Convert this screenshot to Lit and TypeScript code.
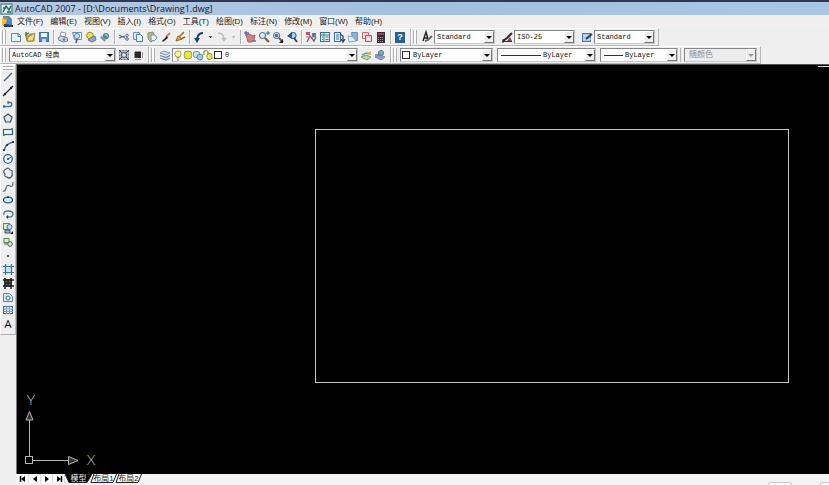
import { LitElement, html, svg, css, nothing, TemplateResult } from "lit";
import { customElement, property } from "lit/decorators.js";
import { classMap } from "lit/directives/class-map.js";

const page = svg`<path d="M2.500 3.500h7l2 2v6h-9z" fill="#e4f4fc" stroke="#5b8fb5"/><path d="M9 3.500v3h3" fill="none" stroke="#3d6f9c"/>`;
const lens = svg`<circle cx="5.500" cy="5.500" r="3" fill="#dcecf5" stroke="#5f7f9a" stroke-width="1.200"/><path d="M8 8l4 4" stroke="#6b5a50" stroke-width="2"/>`;
const bulb = svg`<circle cx="7" cy="6" r="3.200" fill="#fdf6a0" stroke="#a39a45"/><path d="M5.500 10h3M6 12h2" stroke="#77775a"/>`;
const layers = svg`<path d="M2 5l4-2 6 2-4 2z" fill="#cfe0ee" stroke="#7e9db8"/><path d="M2 7.500l6 2 4-2M2 10l6 2 4-2" fill="none" stroke="#6685a6" stroke-width="1.300"/>`;

const icons: Record<string, TemplateResult> = {
  app: svg`<rect x="1" y="2" width="11" height="10" fill="#d8ecea" stroke="#38706f"/><path d="M3 10l3-6 3 4 2-4M3 6h3M7 10h4" fill="none" stroke="#1c6a5c" stroke-width="1.400"/>`,
  doc: svg`<path d="M3 1h6l3 3v7H3z" fill="#5a86c0"/><path d="M2 3l5 2-2 5H2z" fill="#f5c22b"/><path d="M4 9l9 1v2H4z" fill="#25406e"/><path d="M3 2l3 3 2-2" fill="#e8842a"/>`,
  new: page,
  open: svg`<path d="M3 6h3l1-2h4v7H4z" fill="#e9c45c" stroke="#8a7b32"/><path d="M5 7l7-4-2 8H4z" fill="#f3dc8a" stroke="#a4893a"/><path d="M2 5l4-2M3 2v4" stroke="#4d8b45" stroke-width="1.500"/>`,
  save: svg`<rect x="2.500" y="2.500" width="9" height="9" fill="#4f86c6" stroke="#3f72ae"/><rect x="4" y="3" width="6" height="4" fill="#f1f8ff"/><rect x="5" y="9" width="4" height="3" fill="#c8dcef"/>`,
  print: svg`<path d="M5 2l5 1-1 4-5-1z" fill="#fff" stroke="#8b96aa"/><path d="M2.500 7.500l3-1.500 6 2v3l-4 1-5-2z" fill="#ccd3e4" stroke="#7482a4"/><circle cx="8" cy="9.500" r="1.200" fill="#5e78ad"/>`,
  preview: svg`<path d="M2.500 2.500h9v7h-7z" fill="#eaf3fb" stroke="#6a8fb5"/><circle cx="7" cy="6" r="2.600" fill="#c9e2f2" stroke="#5f88b0"/><path d="M7 9l-1 4" stroke="#445c7d" stroke-width="1.500"/>`,
  publish: svg`<circle cx="6" cy="5.500" r="3.300" fill="#f3dc48" stroke="#9a8a34"/><path d="M6 8l5-2 1 4-4 2-4-2z" fill="#8ea3cc" stroke="#6677a0"/>`,
  globe: svg`<path d="M2 7l5-4 5 3-5 5z" fill="#a9bfc8"/><circle cx="8" cy="6" r="3" fill="#4f8794"/><path d="M6 5l3-1 1 3" fill="#a8d7ae"/><path d="M3 7l4 4" stroke="#88929d" stroke-width="2"/>`,
  cut: svg`<path d="M2 5l6 3M2 8l6-2" stroke="#5f7183" stroke-width="1.200"/><circle cx="10" cy="5.500" r="1.300" fill="none" stroke="#4f6a90"/><circle cx="10" cy="9" r="1.300" fill="none" stroke="#4f6a90"/>`,
  copy: svg`<path d="M2.500 2.500h6v7h-6z" fill="#d9eafa" stroke="#6d96c0"/><path d="M5.500 4.500h4l2 2v5h-6z" fill="#eef8ff" stroke="#4d7fb3"/>`,
  paste: svg`<path d="M3 3l5-1 3 6-5 4-3-3z" fill="#b8b982" stroke="#8f9370"/><path d="M6 5h4l2 3-3 3-3-1z" fill="#eef4f5" stroke="#7798a5"/>`,
  brush: svg`<path d="M11 3L7 7" stroke="#d0833c" stroke-width="2"/><path d="M8 6l-5 5 1 1 5-4z" fill="#2b2b2b"/>`,
  block: svg`<path d="M3 11l2-5 4 3z" fill="#f0b43c" stroke="#9a6124"/><path d="M6 7l5-5M8 9l4-2" stroke="#a86a2c" stroke-width="1.700"/>`,
  undo: svg`<path d="M11 3C7 3 5 6 5 11" fill="none" stroke="#1c3d7c" stroke-width="2"/><path d="M2 8h6l-3 5z" fill="#1c3d7c"/>`,
  redo: svg`<path d="M3 3c4 0 6 3 6 7" fill="none" stroke="#b9bfc6" stroke-width="1.600"/><path d="M6 8h6l-3 4z" fill="#b9bfc6"/>`,
  pan: svg`<path d="M5 12L4 8 3 5l3-1 4 2 2-1-1 5-2 2z" fill="#cf7f88" stroke="#a8606c"/><path d="M1 3h5M3 1v5M9 11h4" stroke="#5e6b9a" stroke-width="1.300"/>`,
  zoom: svg`${lens}<path d="M9 3h4M11 1v4" stroke="#346a8f"/>`,
  zoomwin: svg`${lens}<rect x="4" y="4" width="3" height="3" fill="#5c7284"/><path d="M12 9v4H8z" fill="#222"/>`,
  zoomprev: svg`<circle cx="8" cy="5.500" r="3" fill="#b5d2e7" stroke="#3d6a9b" stroke-width="1.200"/><path d="M9 8l3 4" stroke="#4d4045" stroke-width="2"/><path d="M2 6l5-4v7z" fill="#28538e"/>`,
  props: svg`<rect x="2" y="2" width="4" height="3" fill="#cf4f59"/><rect x="8" y="3" width="4" height="4" fill="#5477b5"/><path d="M3 12l3-6 4 5 2-4" fill="none" stroke="#8a6494" stroke-width="1.500"/><path d="M2 7h10" stroke="#ae8b45"/>`,
  center: svg`<rect x="2.500" y="2.500" width="9" height="9" fill="#dceef1" stroke="#3f6e87"/><path d="M6 3v9M3 5h9M7.500 7h3M7.500 9.500h3M4 7h1M4 9.500h1" stroke="#497f95"/>`,
  palette: svg`<rect x="2.500" y="2.500" width="6" height="9" fill="#e4f1fa" stroke="#3b6ca4"/><path d="M4 5h3M4 7h3M4 9h3" stroke="#3f79a6"/><path d="M8 4l3 2v5M9 9l2 3 2-3" fill="none" stroke="#27466f" stroke-width="1.300"/>`,
  sheets: svg`<path d="M5.500 2.500h6v8h-5z" fill="#8eb2d6" stroke="#6b92bb"/><path d="M2 6l5 1 3 4-7 1z" fill="#e1edf7" stroke="#88a8c4"/>`,
  markup: svg`<path d="M2.500 2.500h6v6h-6z" fill="#fbe3e5" stroke="#cf6672"/><path d="M5.500 5.500h6v6h-6z" fill="#f6cbd1" stroke="#bd4c5c"/><path d="M7 8h3v2H7z" fill="#fff"/>`,
  calc: svg`<rect x="3" y="2" width="8" height="11" fill="#332f36"/><rect x="4" y="3" width="6" height="2" fill="#a34149"/><path d="M4 7.500h6M4 9.500h6M4 11.500h6" stroke="#a3a2a8" stroke-dasharray="1 1"/>`,
  textstyle: svg`<path d="M3 11l3-9 2 7M4 8h4" fill="none" stroke="#222" stroke-width="1.400"/><path d="M12 6l-4 4-3 1" fill="none" stroke="#666" stroke-width="2"/>`,
  dimstyle: svg`<path d="M2 11.500h10M3 9v4" stroke="#333"/><path d="M12 3L7 8l-4 3" fill="none" stroke="#2b2b2b" stroke-width="2"/><path d="M7 11l3-4 2 4z" fill="#7a4a4c"/>`,
  tablestyle: svg`<rect x="2.500" y="3.500" width="8" height="8" fill="#a6c6e4" stroke="#4b78a8"/><path d="M3 6h8M3 9h8" stroke="#d5e6f5"/><path d="M12 4L6 9" stroke="#293d58" stroke-width="2"/>`,
  gear: svg`<rect x="2.500" y="2.500" width="9" height="9" fill="#b4bdc7" stroke="#6a7684" stroke-dasharray="2 1"/><circle cx="7" cy="7" r="2.500" fill="#d9e3ef" stroke="#35455a"/><path d="M2 2l3 3M12 2L9 5M2 12l3-3M12 12l-3-3" stroke="#3f4b5a"/>`,
  workspace: svg`<path d="M4 4h6v6H4z" fill="#222"/><path d="M3 5h9M3 7h9M3 9h9M5 3v9M7 3v9M9 3v9" stroke="#333" stroke-dasharray="1 1"/>`,
  layers,
  bulb,
  sun: svg`<circle cx="7" cy="7" r="4" fill="#f3e245" stroke="#a99a3e"/>`,
  freeze: svg`<rect x="2.500" y="3.500" width="6" height="6" rx="2" fill="#c4dfe6" stroke="#6898aa"/><circle cx="9" cy="9" r="3" fill="#9fc3d4" stroke="#628fa6"/>`,
  lock: svg`<path d="M3 7V4q2-3 4 0v2" fill="none" stroke="#b2a53c" stroke-width="1.500"/><rect x="6" y="5.500" width="5" height="6" rx="2" fill="#f2e266" stroke="#9c8f35"/>`,
  swatch: svg`<rect x="3.500" y="3.500" width="7" height="7" fill="#fff" stroke="#333"/>`,
  layerprev: svg`<path d="M2 9l5-2 5 2-4 3z" fill="#c4d2a8" stroke="#8d9a72"/><path d="M3 7l4-2 4 1" fill="none" stroke="#7d9aa8" stroke-width="1.500"/><path d="M8 5l4-2v4z" fill="#d7bd3e"/>`,
  layerstate: svg`<path d="M2 9l5-2 5 2-4 3z" fill="#8aa0c8" stroke="#7389b2"/><circle cx="8" cy="5" r="2.600" fill="#7fa5cc" stroke="#5f80a8"/><path d="M2 7h4" stroke="#6e7f9c" stroke-width="1.500"/>`,
  line: svg`<path d="M3 11l8-8" stroke="#4a6075" stroke-width="1.300"/>`,
  xline: svg`<path d="M2 12L12 2" stroke="#26313c" stroke-width="1.200"/><circle cx="4" cy="10" r="1.200" fill="#222"/><circle cx="10" cy="4" r="1.200" fill="#222"/>`,
  pline: svg`<path d="M2 9.500h7q3-1 1-4H7" fill="none" stroke="#4779aa" stroke-width="1.400"/><path d="M3 8v3M7 4v3" stroke="#33526e"/>`,
  polygon: svg`<path d="M7 3l4 3-1.500 5h-5L3 6z" fill="#e2e7ea" stroke="#44525d" stroke-width="1.200"/>`,
  rect: svg`<rect x="2.500" y="4.500" width="9" height="5" fill="#eef7fb" stroke="#3c6377" stroke-width="1.200"/><path d="M2 10h2M10 4h2" stroke="#4e8c58" stroke-width="2"/>`,
  arc: svg`<path d="M3 12Q4 5 12 3" fill="none" stroke="#4172a0" stroke-width="1.400"/><path d="M2 11h2M5 6h2M11 3h2" stroke="#2a3f55" stroke-width="2"/>`,
  circle: svg`<circle cx="7" cy="7" r="4.300" fill="#e9f3fb" stroke="#33639a" stroke-width="1.300"/><path d="M7 7l3-2" stroke="#33639a"/><circle cx="7" cy="7" r="1" fill="#234"/>`,
  cloud: svg`<path d="M5 3q3-2 4 1 3 0 2 3 1 3-1 4-2 2-4 0-3 0-2-3-3-3 1-5z" fill="#eef1f3" stroke="#4d5d6a" stroke-width="1.200"/>`,
  spline: svg`<path d="M2 11q2 1 3-3t4-2 3-4" fill="none" stroke="#5a6b7a" stroke-width="1.200"/>`,
  ellipse: svg`<ellipse cx="7" cy="7" rx="4.500" ry="2.800" fill="#d5ecf6" stroke="#2f6586" stroke-width="1.300"/><path d="M6 4h2M2 7h1M11 7h1" stroke="#1f3b50" stroke-width="1.500"/>`,
  earc: svg`<path d="M3 8q-1-4 4-4t5 3-4 3H6" fill="none" stroke="#4a7799" stroke-width="1.300"/><path d="M7 8v4l-2-2z" fill="#334"/>`,
  insert: svg`<rect x="2.500" y="2.500" width="6" height="6" fill="#d9efcf" stroke="#5b8f4e"/><circle cx="8.500" cy="6" r="2.500" fill="#cbe0ee" stroke="#55799a"/><path d="M4 9h5v3H4z" fill="#8eb7d5" stroke="#456"/><path d="M12 10v3H9z" fill="#111"/>`,
  makeblock: svg`<rect x="3" y="3.500" width="5" height="4" fill="#d9efcf" stroke="#5b8f4e"/><circle cx="9" cy="9" r="2.300" fill="#dfeada" stroke="#44663f"/><path d="M3 9h3" stroke="#456"/>`,
  point: svg`<rect x="6" y="7" width="2" height="2" fill="#4c6670"/>`,
  hatch: svg`<rect x="3" y="3" width="8" height="8" fill="#cbe2f2"/><path d="M4.500 2v11M10.500 2v11M2 4.500h11M2 10.500h11" stroke="#3f76a6" stroke-width="1.200"/>`,
  gradient: svg`<rect x="3" y="3" width="8" height="8" fill="#777"/><path d="M4 2v11M10 2v11M2 4h11M2 10h11M7 4v6M4 7h6" stroke="#1e1e20" stroke-width="1.500"/>`,
  region: svg`<path d="M2.500 3.500h6l3 3v5h-9z" fill="#d9eafa" stroke="#4f86b8"/><circle cx="7" cy="8" r="2" fill="#fff" stroke="#3d6d99"/>`,
  table: svg`<rect x="2.500" y="3.500" width="9" height="7" fill="#edf5fd" stroke="#3e6ba6"/><path d="M5.500 4v7M8.500 4v7M3 6h9M3 8.500h9" stroke="#7aa0cc"/>`,
  first: svg`<path d="M4.500 4v6" stroke="#000" stroke-width="1.500"/><path d="M9 4v6L5 7z"/>`,
  prev: svg`<path d="M9 4v6L5 7z"/>`,
  next: svg`<path d="M5 4v6l4-3z"/>`,
  last: svg`<path d="M9.500 4v6" stroke="#000" stroke-width="1.500"/><path d="M5 4v6l4-3z"/>`,
  drop: svg`<path d="M4 6h6l-3 3z" fill="currentColor"/>`,
};

const icon = (name: string) => html`<svg class="icon" viewBox="0 0 14 14" aria-hidden="true">${icons[name]}</svg>`;

const shared = css`
  * { box-sizing: border-box; }
  .icon { display: block; width: 14px; height: 14px; flex: none; }
`;

@customElement("cad-combo")
export class CadCombo extends LitElement {
  @property() label = "";
  @property() value = "";
  @property({ type: Boolean, reflect: true }) line = false;
  @property({ type: Boolean, reflect: true }) disabled = false;
  @property({ attribute: false }) glyphs: string[] = [];

  static styles = [shared, css`
    :host { display: block; height: 14px; flex: none; }
    label {
      display: flex; align-items: center; position: relative; height: 14px;
      border: 1px solid #85858a; border-right-color: #c8c8c8; border-bottom-color: #c8c8c8;
      background: #fff; padding-right: 10px;
    }
    .glyph { display: flex; width: 10px; height: 12px; align-items: center; justify-content: center; flex: none; }
    .sample { flex: 1; height: 1px; margin-left: 3px; background: #333; }
    select {
      appearance: none; flex: 1; min-width: 0; height: 12px; border: 0; margin: 0; padding: 0 0 0 2px;
      border-radius: 0; background: transparent; color: #111; outline: 0;
      font: 7px/12px "Liberation Mono", "Noto Sans CJK SC", monospace;
    }
    :host([line]) select { flex: none; width: 44px; }
    .arrow {
      position: absolute; right: 0; top: 0; bottom: 0; width: 10px; display: flex; align-items: center; justify-content: center;
      pointer-events: none; background: #efeeee; color: #000;
      border: 1px solid #fff; border-right-color: #77777a; border-bottom-color: #77777a;
    }
    :host([disabled]) label { background: #eeeded; }
    :host([disabled]) select { color: #8a8a8a; opacity: 1; font-size: 8px; padding-left: 4px; }
    :host([disabled]) .arrow { color: #999; }
  `];

  render() {
    return html`<label>
      ${this.glyphs.map((g) => html`<span class="glyph">${icon(g)}</span>`)}
      ${this.line ? html`<span class="sample"></span>` : nothing}
      <select aria-label=${this.label} ?disabled=${this.disabled}><option>${this.value}</option></select>
      <span class="arrow">${icon("drop")}</span>
    </label>`;
  }
}

const menus = ["文件(F)", "编辑(E)", "视图(V)", "插入(I)", "格式(O)", "工具(T)", "绘图(D)", "标注(N)", "修改(M)", "窗口(W)", "帮助(H)"];
const standard = [
  ["new", "open", "save"],
  ["print", "preview", "publish", "globe"],
  ["cut", "copy", "paste", "brush", "block"],
  ["undo", "drop", "redo", "drop-off"],
  ["pan", "zoom", "zoomwin", "zoomprev"],
  ["props", "center", "palette", "sheets", "markup", "calc"],
  ["help"],
];
const draw = ["line", "xline", "pline", "polygon", "rect", "arc", "circle", "cloud", "spline", "ellipse", "earc", "insert", "makeblock", "point", "hatch", "gradient", "region", "table"];

@customElement("app-root")
export class AppRoot extends LitElement {
  static styles = [shared, css`
    :host {
      display: flex; flex-direction: column; min-height: 100vh; background: #f0efef; color: #1a1a1a;
      font: 8px/12px "Liberation Sans", "Noto Sans CJK SC", sans-serif;
    }
    button { font: inherit; color: inherit; border: 0; padding: 0; margin: 0; background: none; }
    header {
      display: flex; align-items: center; gap: 1px; height: 15px; border-top: 2px solid #303850;
      background: linear-gradient(90deg, #b3c9e2, #a3c0e0 50%, #a9c6e6);
    }
    h1 { margin: 0; font: 9px/12px "Open Sans", "Noto Sans", sans-serif; white-space: nowrap; color: #16202c; }
    nav { display: flex; align-items: center; height: 13px; background: #f1f0f0; }
    .menus { display: flex; gap: 7px; margin-left: 3px; }
    .menus button { white-space: nowrap; }
    .row { display: flex; height: 18px; }
    .bar {
      display: flex; align-items: center; padding-right: 3px;
      border: 1px solid #fff; border-right-color: #b5b5b5; border-bottom-color: #b5b5b5;
    }
    .grip { width: 4px; height: 14px; margin: 0 3px 0 1px; flex: none; border-left: 1px solid #b0b0b0; border-right: 1px solid #b0b0b0; background: #fff; }
    .bar button { width: 14px; height: 14px; flex: none; }
    .group { display: flex; }
    .group + .group::before { content: ""; width: 1px; height: 14px; margin: 0 2px; background: #b2b2b2; box-shadow: 1px 0 #fff; }
    .bar button.narrow { width: 9px; overflow: hidden; }
    .narrow .icon { width: 9px; }
    .narrow.off { color: #b0b0b0; }
    .help { width: 10px; height: 11px; margin: 0 auto; background: #2a5f92; color: #fff; font: bold 9px/11px "Liberation Sans", sans-serif; text-align: center; }
    .w-style { width: 61px; }
    .w-space { width: 107px; margin-right: 1px; }
    .w-layer { width: 186px; margin-right: 1px; }
    .w-color { width: 93px; margin-right: 4px; }
    .w-type { width: 99px; margin-right: 4px; }
    .w-weight { width: 78px; margin-right: 2px; }
    .w-plot { width: 73px; }
    .gap { margin-left: 5px; }
    .rule { width: 1px; height: 14px; margin-right: 3px; background: #b2b2b2; }
    main { flex: 1; display: flex; min-height: 0; }
    aside { width: 16px; flex: none; }
    .tools {
      display: flex; flex-direction: column; height: 271px; padding-bottom: 3px;
      border: 1px solid #fff; border-right-color: #bbb; border-bottom-color: #b0b0b0;
    }
    .vgrip { height: 4px; margin: 1px 2px 0; flex: none; border-top: 1px solid #b0b0b0; border-bottom: 1px solid #b0b0b0; background: #fff; }
    .tools button { flex: 1; min-height: 0; display: flex; align-items: center; justify-content: center; }
    .letter { font: 11px/12px "Open Sans", sans-serif; color: #111; }
    .view { flex: 1; min-width: 0; display: flex; flex-direction: column; }
    .canvas { flex: 1; position: relative; overflow: hidden; background: #000; border-top: 1px solid #55555a; border-left: 1px solid #77777a; }
    .drawn { position: absolute; left: 298px; top: 64px; right: 40px; bottom: 91px; border: 1px solid #c4c4c4; }
    .ucs { position: absolute; left: 5px; bottom: 2px; width: 80px; height: 84px; display: block; }
    .ucs text { font: 300 14px Lato, "Open Sans", sans-serif; fill: #c4c4c4; text-anchor: middle; }
    .edge { position: absolute; right: 0; top: 1px; width: 11px; height: 1px; background: #ddd; }
    footer { display: flex; height: 11px; align-items: flex-start; background: #f3f3f3; padding-left: 1px; }
    .pager { display: flex; background: #fafafa; }
    .pager button { width: 12px; height: 9px; display: flex; align-items: center; justify-content: center; overflow: hidden; border-right: 1px solid #ddd; }
    .tab { position: relative; width: 27px; height: 9px; margin-right: -2px; line-height: 9px; z-index: 0; white-space: nowrap; }
    .tab svg { position: absolute; left: 0; top: 0; width: 100%; height: 9px; z-index: -1; fill: #fbfbfb; stroke: #222; }
    .tab.on { color: #eee; }
    .tab.on svg { fill: #000; }
    .thumb { align-self: flex-end; width: 24px; height: 3px; margin: 0 28px 0 auto; border: 1px solid #c9c9c9; border-bottom: 0; border-radius: 3px 3px 0 0; background: #fff; }
    .corner { align-self: flex-end; width: 9px; height: 3px; border: 1px solid #c9c9c9; border-width: 1px 0 0 1px; border-radius: 3px 0 0 0; background: #fff; }
  `];

  private tool(name: string) {
    if (name === "help") return html`<button aria-label="help"><div class="help">?</div></button>`;
    const narrow = name.startsWith("drop");
    return html`<button aria-label=${name} class=${classMap({ narrow, off: name === "drop-off" })}>${icon(narrow ? "drop" : name)}</button>`;
  }

  private tab(text: string, on = false) {
    return html`<button class=${classMap({ tab: true, on })}>
      <svg viewBox="0 0 27 9" preserveAspectRatio="none" aria-hidden="true">
        <path d=${on ? "M0 0L4 8.500H22L27 0z" : "M4 0L1 8.500H23L26.500 0"}></path>
      </svg>${text}</button>`;
  }

  render() {
    return html`
      <header>${icon("app")}<h1>AutoCAD 2007 - [D:\\Documents\\Drawing1.dwg]</h1></header>
      <nav>${icon("doc")}<div class="menus">${menus.map((m) => html`<button>${m}</button>`)}</div></nav>
      <div class="row">
        <div class="bar"><span class="grip"></span>
          ${standard.map((g) => html`<div class="group">${g.map((n) => this.tool(n))}</div>`)}
        </div>
        <div class="bar"><span class="grip"></span>
          ${this.tool("textstyle")}<cad-combo class="w-style" label="文字样式" value="Standard"></cad-combo>
          <span class="gap"></span>${this.tool("dimstyle")}<cad-combo class="w-style" label="标注样式" value="ISO-25"></cad-combo>
          <span class="gap"></span>${this.tool("tablestyle")}<cad-combo class="w-style" label="表格样式" value="Standard"></cad-combo>
        </div>
      </div>
      <div class="row">
        <div class="bar"><span class="grip"></span>
          <cad-combo class="w-space" label="工作空间" value="AutoCAD 经典"></cad-combo>
          ${this.tool("gear")}${this.tool("workspace")}
        </div>
        <div class="bar"><span class="grip"></span>
          ${this.tool("layers")}
          <cad-combo class="w-layer" label="图层" value="0" .glyphs=${["bulb", "sun", "freeze", "lock", "swatch"]}></cad-combo>
          ${this.tool("layerprev")}${this.tool("layerstate")}
        </div>
        <div class="bar"><span class="grip"></span>
          <cad-combo class="w-color" label="颜色" value="ByLayer" .glyphs=${["swatch"]}></cad-combo>
          <cad-combo class="w-type" label="线型" value="ByLayer" line></cad-combo>
          <cad-combo class="w-weight" label="线宽" value="ByLayer" line></cad-combo>
          <span class="rule"></span>
          <cad-combo class="w-plot" label="打印样式" value="随颜色" disabled></cad-combo>
        </div>
      </div>
      <main>
        <aside><div class="tools"><span class="vgrip"></span>
          ${draw.map((n) => this.tool(n))}
          <button class="letter">A</button>
        </div></aside>
        <div class="view">
          <div class="canvas">
            <div class="edge"></div>
            <div class="drawn"></div>
            <svg class="ucs" viewBox="0 -4 80 84">
              <g fill="none" stroke="#b5b5b5">
                <rect x="3.500" y="64.500" width="7" height="7"/>
                <path d="M7.500 64V28M11 68.500h35"/>
                <path d="M7.500 19.500l-3.500 8.500h7zM56 68.500l-9.500-4v8z" fill="#333"/>
              </g>
              <text x="9" y="13">Y</text><text x="69" y="73">X</text>
            </svg>
          </div>
          <footer>
            <div class="pager">${["first", "prev", "next", "last"].map((n) => this.tool(n))}</div>
            ${this.tab("模型", true)}${this.tab("布局1")}${this.tab("布局2")}
            <span class="thumb"></span><span class="corner"></span>
          </footer>
        </div>
      </main>`;
  }
}
